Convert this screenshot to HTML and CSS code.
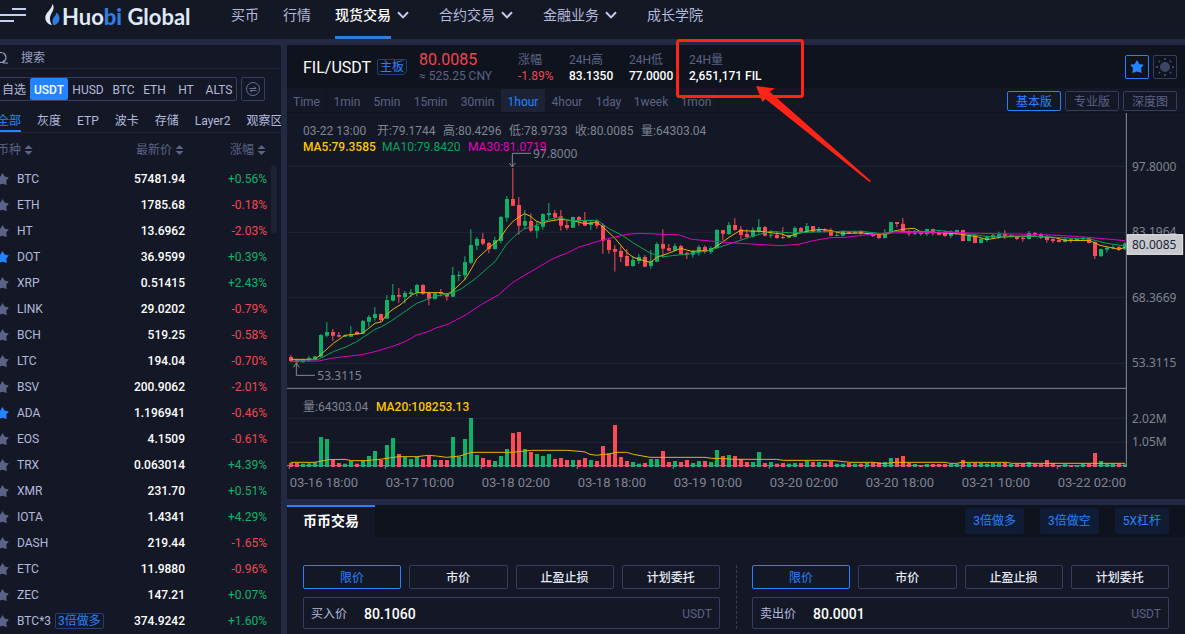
FILE: index.html
```html
<!DOCTYPE html>
<html lang="zh-CN">
<head>
<meta charset="utf-8">
<title>FIL/USDT - Huobi Global</title>
<link rel="stylesheet" href="styles.css">
</head>
<body>
<svg class="defs" aria-hidden="true">
  <symbol id="star" viewBox="0 0 13 13"><path d="M6.5 0 8.6 3.600 12.8 4.400 10.3 7.500 10.8 12 6.5 10.700 2.2 12 2.7 7.500 .2 4.400 4.4 3.600Z"/></symbol>
  <symbol id="sort" viewBox="0 0 9 10"><path d="M4.5 0 8.5 4H.5ZM4.5 10 8.5 6H.5Z"/></symbol>
  <symbol id="chevron" viewBox="0 0 12 8"><path d="M1 1.2 6 6.4 11 1.2" fill="none" stroke="currentColor" stroke-width="2"/></symbol>
</svg>
<div class="shell">
  <header class="topbar">
    <button class="burger" aria-label="菜单"><svg viewBox="0 0 28 14" width="28" height="14"><path d="M13 1h14M0 7h27M0 13h15" stroke="#c3d0f2" stroke-width="2"/></svg></button>
    <a class="logo" href="#">
      <svg viewBox="0 0 15 22" width="15" height="22"><path d="M7.5 0C9.5 3 8.6 5.600 7 8.500 5.600 11 4.600 13 5 16c.2 2 1 3.700 2 5C3 20.500 .3 17.500 .3 13.500.3 8.500 6.500 6 7.500 0Z" fill="#dfe9f8"/><path d="M11.500 8.500c2 1.500 3.200 4 3 6.800-.2 3-2.500 5.300-5.700 5.900-1.500-2-1.800-4.400-.6-6.700 1-2 2.900-3.200 3.300-6Z" fill="#2f7de0"/></svg>
      <span>Huo<b>bi</b> Global</span>
    </a>
    <nav class="nav">
      <a href="#">买币</a>
      <a href="#">行情</a>
      <a href="#" class="on"><span>现货交易</span><svg class="chev"><use href="#chevron"/></svg></a>
      <a href="#" class="more"><span>合约交易</span><svg class="chev"><use href="#chevron"/></svg></a>
      <a href="#" class="more"><span>金融业务</span><svg class="chev"><use href="#chevron"/></svg></a>
      <a href="#" class="more">成长学院</a>
    </nav>
  </header>

  <div class="layout">
    <aside class="side">
      <label class="search">
        <svg viewBox="0 0 14 14" width="14" height="14"><circle cx="7" cy="6.500" r="5" fill="none" stroke="#9aa0c4" stroke-width="1.200"/><path d="M9.500 9.500V12H14" fill="none" stroke="#9aa0c4" stroke-width="1.200"/></svg>
        <input type="text" placeholder="搜索">
      </label>
      <div class="markets">
        <div class="market-tabs">
          <button>自选</button><button class="on">USDT</button><button>HUSD</button><button>BTC</button><button>ETH</button><button>HT</button><button>ALTS</button>
        </div>
        <button class="switch" aria-label="切换"><svg viewBox="0 0 14 14" width="14" height="14" fill="none" stroke="#6a7096"><circle cx="7" cy="7" r="6.500"/><path d="M3.500 6.500H10L8 4.500M10.500 8.500H4L6 10"/></svg></button>
      </div>
      <div class="zones">
        <button class="on">全部</button><button>灰度</button><button>ETP</button><button>波卡</button><button>存储</button><button>Layer2</button><button>观察区</button>
      </div>
      <div class="list">
        <table>
          <thead><tr><th>币种 <svg class="sort"><use href="#sort"/></svg></th><th>最新价 <svg class="sort"><use href="#sort"/></svg></th><th>涨幅 <svg class="sort"><use href="#sort"/></svg></th></tr></thead>
          <tbody id="coins"></tbody>
        </table>
        <i class="thumb"></i>
      </div>
    </aside>

    <main class="main">
      <section class="panel">
        <div class="pair">
          <h1>FIL/USDT</h1><span class="board">主板</span>
          <div class="last"><strong>80.0085</strong><span>≈ 525.25 CNY</span></div>
          <dl class="stats">
            <div><dt>涨幅</dt><dd class="down">-1.89%</dd></div>
            <div><dt>24H高</dt><dd>83.1350</dd></div>
            <div><dt>24H低</dt><dd>77.0000</dd></div>
            <div><dt>24H量</dt><dd>2,651,171 FIL</dd></div>
          </dl>
          <div class="tools">
            <button class="on" aria-label="收藏"><svg width="14" height="14" fill="#2483ff"><use href="#star"/></svg></button>
            <button aria-label="主题"><svg viewBox="0 0 18 18" width="18" height="18" stroke="#3f4565" stroke-width="2"><circle cx="9" cy="9" r="4" fill="#3f4565"/><path d="M9 0v2M9 16v2M0 9h2M16 9h2M2.800 2.800l1.200 1.200M14 14l1.200 1.200M2.800 15.200 4 14M14 4l1.200-1.200"/></svg></button>
          </div>
        </div>
        <div class="frames">
          <div class="periods">
            <button class="time">Time</button><button>1min</button><button>5min</button><button>15min</button><button>30min</button><button class="on">1hour</button><button>4hour</button><button>1day</button><button>1week</button><button class="end">1mon</button>
          </div>
          <div class="views"><button class="on">基本版</button><button>专业版</button><button>深度图</button></div>
        </div>
        <div class="chart">
          <div class="legend">
            <p class="ohlc"><span>03-22 13:00</span> <span>开:79.1744</span> <span>高:80.4296</span> <span>低:78.9733</span> <span>收:80.0085</span> <span>量:64303.04</span></p>
            <p class="ma"><span class="c-y">MA5:79.3585</span> <span class="c-g">MA10:79.8420</span> <span class="c-m">MA30:81.0719</span></p>
          </div>
          <svg id="plot" viewBox="0 0 2694 1158" role="img" aria-label="K线图"></svg>
        </div>
      </section>

      <section class="panel trade">
        <div class="trade-head">
          <h2>币币交易</h2>
          <div class="lever"><a href="#">3倍做多</a><a href="#">3倍做空</a><a href="#">5X杠杆</a></div>
        </div>
        <div class="forms">
          <form>
            <div class="kinds"><button type="button" class="on">限价</button><button type="button">市价</button><button type="button">止盈止损</button><button type="button">计划委托</button></div>
            <label class="field"><span>买入价</span><input type="text" value="80.1060"><em>USDT</em></label>
          </form>
          <form>
            <div class="kinds"><button type="button" class="on">限价</button><button type="button">市价</button><button type="button">止盈止损</button><button type="button">计划委托</button></div>
            <label class="field"><span>卖出价</span><input type="text" value="80.0001"><em>USDT</em></label>
          </form>
        </div>
      </section>
    </main>
  </div>
  <svg class="callout" viewBox="0 0 196 144" width="196" height="144" aria-hidden="true">
    <rect x="1.500" y="1.500" width="125" height="56" rx="2" fill="none" stroke="#ff2416" stroke-width="3"/>
    <path d="M80 47 99 49.500 93.500 52.500 195 142 193.500 143 89.500 60 86.500 63Z" fill="#ff2416"/>
  </svg>
</div>
<script src="chart.js"></script>
</body>
</html>
```
FILE: styles.css
```css
* { box-sizing: border-box; }
body {
  margin: 0;
  height: 100vh;
  overflow: hidden;
  background: #242943;
  color: #b3b9dc;
  font: 12px/16px Roboto, "Noto Sans CJK SC", sans-serif;
}
button { border: 0; padding: 0; background: none; color: inherit; font: inherit; cursor: pointer; }
input { border: 0; outline: 0; padding: 0; background: none; color: inherit; font: inherit; min-width: 0; }
a { color: inherit; text-decoration: none; }
h1, h2, p, dl, dd { margin: 0; }
.defs { position: absolute; width: 0; height: 0; }

/* the shell is scrolled 16px to the left */
.shell { position: relative; margin-left: -16px; height: 100vh; display: flex; flex-direction: column; }

.topbar { flex: none; display: flex; height: 39px; margin-bottom: 6px; padding-left: 15px; background: #141724; }
.burger { height: 30px; display: flex; align-items: center; }
.logo { display: flex; align-items: flex-start; gap: 2px; padding-top: 4px; margin-left: 18px; width: 168px; color: #dfe9f8; font: 700 22px/26px Lato, sans-serif; white-space: nowrap; }
.logo b { color: #2f7de0; }
.nav { display: flex; gap: 24px; margin-left: 18px; font-size: 14px; line-height: 30px; white-space: nowrap; }
.nav a { display: flex; gap: 6px; }
.nav .on { color: #fff; font-weight: 500; }
.nav .on span { border-bottom: 3px solid #2f7de0; }
.nav .more { margin-left: 6px; }
.chev { width: 12px; height: 8px; margin-top: 11px; color: #c5caea; }

.layout { flex: 1; min-height: 0; display: flex; gap: 6px; }
.side { flex: none; width: 297px; background: #141826; overflow: hidden; border-radius: 0 2px 0 0; }
.search { display: flex; align-items: center; gap: 13px; height: 24px; padding: 2px 0 0 10px; border-bottom: 1px solid #1f2438; }
.search input::placeholder { color: #9aa0c4; opacity: 1; }
.markets { display: flex; gap: 4px; padding: 8px 16px 6px 13px; }
.market-tabs { flex: 1; display: grid; grid-template-columns: 32px 38px 40px 31px 31px 32px 1fr; height: 24px; border: 1px solid #363c60; border-radius: 2px; }
.market-tabs button { padding-top: 2px; }
.market-tabs .on { background: #2483ff; color: #fff; border-radius: 2px; font-weight: 500; }
.switch { display: flex; align-items: center; justify-content: center; width: 24px; height: 24px; border: 1px solid #363c60; border-radius: 2px; }
.zones { display: flex; gap: 16px; height: 26px; padding-left: 13px; border-bottom: 1px solid #1f2438; white-space: nowrap; }
.zones button { flex: none; padding-top: 2px; }
.zones .on { color: #2483ff; border-bottom: 2px solid #2483ff; padding-top: 4px; }

.list { position: relative; }
.thumb { position: absolute; right: 4px; top: 32px; width: 6px; height: 68px; border-radius: 3px; background: #1e2236; }
table { width: 100%; border-collapse: collapse; table-layout: fixed; }
th { height: 32px; padding: 2px 0 0; font-weight: 400; text-align: right; color: #5c6285; }
th:first-child { width: 120px; padding-left: 13px; text-align: left; }
th:nth-child(2) { width: 81px; padding-right: 1px; }
th:last-child { padding-right: 15px; }
.sort { width: 9px; height: 10px; fill: #5c6285; vertical-align: -1px; }
td { height: 26px; padding: 2px 0 0; text-align: right; }
td:nth-child(2) { color: #fff; font-weight: 500; }
td:last-child { padding-right: 14px; }
td:first-child { padding-left: 12px; text-align: left; white-space: nowrap; }
.coin { display: flex; align-items: center; gap: 8px; }
.coin svg { width: 13px; height: 13px; fill: #5c6285; }
.coin .fav { fill: #2483ff; }
.coin em { margin-left: -4px; padding: 0 2px; border: 1px solid #1c4078; color: #2483ff; font-style: normal; line-height: 14px; border-radius: 2px; }
.up { color: #12b166; }
.down, .stats .down { color: #f04652; }

.main { flex: 1; min-width: 0; display: flex; flex-direction: column; gap: 6px; }
.panel { background: #141826; }
.pair { display: flex; align-items: center; height: 44px; padding: 0 8px 0 16px; background: #0f131d; border-bottom: 1px solid #151720; white-space: nowrap; }
.pair h1 { padding-top: 2px; font-size: 16px; line-height: 20px; font-weight: 400; color: #fff; width: 74px; }
.board { width: 30px; height: 16px; border: 1px solid #1c4078; border-radius: 2px 2px 5px 2px; color: #2483ff; line-height: 15px; text-align: center; }
.last { width: 99px; padding-top: 3px; margin-left: 12px; color: #5c6285; }
.last strong { display: block; color: #f04652; font-size: 16px; font-weight: 400; line-height: 16px; }
.last span { display: block; }
.stats { display: flex; gap: 15px; padding-top: 2px; }
.stats div { min-width: 45px; }
.stats div:first-child { min-width: 36px; }
.stats dt { color: #5c6285; }
.stats dd { color: #fff; font-weight: 500; }
.stats .down { font-weight: 400; }
.tools { display: flex; gap: 4px; margin-left: auto; }
.tools button { width: 24px; height: 24px; display: flex; align-items: center; justify-content: center; border: 1px solid #363c60; border-radius: 2px; }
.tools .on { border-color: #2483ff; }

.frames { display: flex; height: 24px; padding-right: 8px; border-bottom: 1px solid #10131b; color: #5c6285; }
.periods { display: grid; grid-template-columns: 40px 40px 40px 47px 47px 44px 44px 39px 46px 45px; }
.periods button { padding-top: 2px; }
.periods .time, .periods .end { border-right: 1px solid #10131b; }
.periods .on { background: #1d2236; color: #2483ff; }
.views { display: flex; gap: 4px; margin: 2px 0 2px auto; }
.views button { width: 54px; height: 20px; padding-top: 2px; border: 1px solid #363c60; border-radius: 2px; line-height: 16px; }
.views .on { border-color: #2483ff; color: #2483ff; }

.chart { position: relative; }
.chart > svg { display: block; width: 100%; height: auto; }
.legend { position: absolute; left: 16px; top: 10px; color: #7f8491; }
.legend p { display: grid; white-space: nowrap; line-height: 16px; }
.ohlc { grid-template-columns: 74px repeat(5, 66px); }
.ma { grid-template-columns: 79px 86px 80px; }
.c-y { color: #ffc400; font-weight: 500; }
.c-g { color: #08a35a; }
.c-m { color: #e100c3; }

.grid { stroke: #20243a; stroke-width: 3; }
.axis { stroke: #858998; stroke-width: 3; fill: none; }
.g { fill: #0cb367; }
.r { fill: #ff4a54; }
.line { fill: none; stroke-width: 3; }
.line.y { stroke: #e8b400; }
.line.gr { stroke: #08a35a; }
.line.m { stroke: #e100c3; }
.tick { fill: #7f8491; font: 36px "Noto Sans", sans-serif; }
.date { fill: #7f8491; font: 39px Roboto, sans-serif; }
.vol { fill: #7f8491; font: 36px Roboto, "Noto Sans CJK SC", sans-serif; }
.vol.y { fill: #ffc400; font-weight: 500; }
.tag { fill: #c8c9ce; stroke: #eee; stroke-width: 3; }
.tagtext { fill: #20243a; }

.trade { flex: 1; }
.trade-head { display: flex; justify-content: space-between; height: 32px; padding-right: 16px; background: #0f131d; }
.trade-head h2 { width: 88px; padding-left: 16px; border-top: 2px solid #2483ff; background: #141826; color: #fff; font-size: 14px; line-height: 29px; font-weight: 700; }
.lever { display: flex; gap: 16px; padding: 3px 0; }
.lever a { padding: 1px 8px 0; line-height: 25px; border-radius: 2px; background: #101c34; color: #2483ff; }
.forms { display: grid; grid-template-columns: 1fr 1fr; padding-top: 28px; }
.forms form { padding: 0 16px; display: grid; gap: 8px; }
.forms form + form { border-left: 1px dashed #363c60; padding-left: 15px; }
.kinds { display: grid; grid-template-columns: repeat(4, 1fr); gap: 8px; color: #e6e9f7; font-weight: 500; }
.kinds button { height: 24px; padding-top: 2px; border: 1px solid #363c60; border-radius: 2px; }
.kinds .on { border-color: #2483ff; color: #2483ff; font-weight: 400; }
.field { display: flex; align-items: center; height: 32px; padding: 2px 7px 0; border: 1px solid #363c60; border-radius: 2px; }
.field span { width: 53px; }
.field input { flex: 1; color: #fff; font-size: 14px; font-weight: 500; }
.field em { color: #5c6285; font-style: normal; }

.callout { position: absolute; left: 692px; top: 39px; pointer-events: none; }
```
FILE: chart.js
```js
const coins = [
  ['BTC', '57481.94', '+0.56%'], ['ETH', '1785.68', '-0.18%'], ['HT', '13.6962', '-2.03%'],
  ['DOT', '36.9599', '+0.39%', 1], ['XRP', '0.51415', '+2.43%'], ['LINK', '29.0202', '-0.79%'],
  ['BCH', '519.25', '-0.58%'], ['LTC', '194.04', '-0.70%'], ['BSV', '200.9062', '-2.01%'],
  ['ADA', '1.196941', '-0.46%', 1], ['EOS', '4.1509', '-0.61%'], ['TRX', '0.063014', '+4.39%'],
  ['XMR', '231.70', '+0.51%'], ['IOTA', '1.4341', '+4.29%'], ['DASH', '219.44', '-1.65%'],
  ['ETC', '11.9880', '-0.96%'], ['ZEC', '147.21', '+0.07%'], ['BTC*3', '374.9242', '+1.60%', 0, '3倍做多']
];
document.getElementById('coins').innerHTML = coins.map(([n, p, c, fav, tag]) =>
  `<tr><td><div class="coin"><svg class="${fav ? 'fav' : ''}"><use href="#star"/></svg>${n}${tag ? ` <em>${tag}</em>` : ''}</div></td><td>${p}</td><td class="${c[0] === '+' ? 'up' : 'down'}">${c}</td></tr>`).join('');

/* candles: direction, high, body top, body bottom, low; one block per vertical offset */
const candleBlocks = [
  [141, `r585,591,603,607 r597,599,607,609 g597,600,607,608 g588,594,601,605 g588,589,600,601 g522,525,590,592 g487,516,527,532 r507,516,527,543 r516,525,530,532 g524,526,530,531 g498,523,530,531 r513,516,523,525 g480,483,521,523 g465,471,485,500 g441,462,474,482 r461,462,480,487 g405,420,476,477 g372,405,422,424 r384,405,410,428 g393,399,411,430 g387,397,402,411 g372,375,397,409 r372,375,401,405 r395,399,416,436 g396,400,416,419 r387,396,401,409 r399,400,410,422 g321,345,410,411 g334,345,348,364 g289,306,346,360 g208,255,308,313 g231,237,257,270 r219,237,251,256 r246,249,267,280 g230,240,267,269 g168,171,243,250 g108,117,173,185 r24,117,137,138 r111,135,197,224 g150,183,197,208 r160,183,212,217 g183,198,212,235 g160,162,200,209 g129,159,165,181 r150,159,171,180`],
  [171, `r120,139,167,182 r153,165,174,180 g140,141,173,174 r138,141,153,168 r126,150,167,168 g150,157,165,180 r148,153,167,176 r160,166,212,251 r205,210,240,251 r226,237,245,305 r229,243,261,276 r237,258,288,289 g258,270,288,290 g252,261,273,282 r255,261,290,291 g240,273,288,296 g217,222,275,277 r178,222,236,263 r222,234,242,244 g220,228,242,244 r224,228,252,254 r245,249,254,267 g240,243,254,263 g226,231,246,257 r226,231,246,251 g229,234,246,252 g177,180,234,236 r180,180,191,211 g156,165,192,195 r145,165,180,182 r168,178,195,208 r178,192,201,203 g172,181,200,202 g147,171,184,190 r168,171,197,199 g180,194,197,204 r183,195,204,206 r171,201,204,207 g195,195,203,204 g169,174,200,202 r171,174,186,190 g159,168,186,187 r168,168,185,187 g171,180,185,188 r175,178,182,187 r175,181,197,198 g187,195,198,199 g180,183,197,199 r184,186,190,192`],
  [231, `g122,126,130,132 r120,123,131,134 g127,129,133,135 r130,133,138,141 r132,134,144,147 g117,131,144,145 g96,96,126,128 r96,96,102,112 r84,101,126,128 r119,125,131,138 g120,127,131,136 r122,127,132,137 g116,117,132,138 r116,117,130,137 r121,127,134,137 r122,128,138,140 g121,131,138,144 g119,120,131,132 r119,120,153,154 g132,136,153,154 r134,136,159,160 g144,147,159,160 g136,141,150,156 g130,135,143,145 g125,132,140,146 r120,131,138,147 g132,136,139,142 r138,140,147,150 r140,143,147,155 g123,129,147,148 r126,129,132,138 r129,132,143,147 r135,141,150,158 r144,147,153,159 r146,150,156,157 g142,147,156,157 r145,148,152,158 g143,146,151,154 g139,144,148,151 r143,144,159,160 r154,156,198,207 g176,177,198,201 g170,173,179,188 g166,172,175,178 r168,171,179,183 g157,160,178,180`]
];
const volumes = [
  8,8,6,7,10,86,80,17,8,6,14,6,15,29,44,17,62,83,35,26,20,27,20,29,17,17,17,86,27,80,143,32,23,17,14,29,50,98,101,50,41,35,29,35,20,23,17,17,17,
  23,17,14,59,37,122,26,14,11,6,8,20,20,44,11,14,11,17,8,14,14,11,47,29,32,29,20,11,11,41,8,11,6,8,6,8,8,14,11,11,8,14,6,6,8,6,6,8,9,10,
  11,23,23,29,8,5,2,5,5,5,5,6,6,17,8,8,8,6,8,8,9,5,6,6,11,6,6,17,8,2,5,2,2,6,6,38,14,6,6,6,4
];
/* each line is a list of [x offset, y offset, points] */
const lines = [
  ['y', [[-6,141,'17,598 90,598 108,583 145,550 180,526 232,520 270,490 290,485 305,464 325,447 345,435 380,405 395,398 470,398 485,404 503,393 522,375 540,358 560,325 575,297 610,265 645,236 665,205 685,183 718,161 735,168 755,184 772,189 790,184'],
    [819,171,'0,148 40,152 70,160 90,160 110,156 130,172 165,205 200,247 220,262 255,273 272,277 290,262 325,250 362,235 395,244 450,241 475,225 510,200 540,182 600,184 665,192 685,199 715,190 745,183 780,178 810,181 840,189'],
    [1674,231,'0,130 50,129 100,133 130,131 150,122 190,116 208,115 226,125 300,129 350,133 400,141 426,149 470,141 560,138 630,143 660,151 735,152 765,166 822,178 840,172']]],
  ['gr', [[-6,141,'17,604 100,598 145,575 180,562 215,545 270,508 290,500 320,482 395,430 450,409 500,400 530,386 575,353 610,322 630,305 650,275 665,252 690,227 718,206 745,200 780,184 810,173'],
    [819,171,'0,143 30,152 112,151 150,178 185,195 225,222 272,250 310,260 400,250 450,241 520,218 570,201 630,184 700,189 760,186'],
    [1674,231,'0,124 50,124 110,131 150,124 250,125 280,121 330,127 380,133 430,140 500,138 560,139 600,140 700,146 735,147 780,159 840,168']]],
  ['m', [[-6,141,'17,604 100,603 145,594 230,584 270,575 320,560 360,545 395,525 430,515 450,505 490,492 540,466 590,433 640,405 680,370 718,346 760,322 800,298'],
    [819,171,'0,257 20,250 55,232 110,215 165,201 200,193 240,190 310,193 355,194 395,208 450,213 540,220 660,227 715,223 760,212 810,203'],
    [1674,231,'0,142 60,135 110,130 200,127 330,127 400,130 560,133 640,136 730,142 840,152']]],
  ['y', [[-6,801,'17,247 90,247 130,239 180,238 200,242 240,242 285,238 340,230 395,230 430,226 455,228 485,232 525,228 558,217 680,217 740,211 845,211'],
    [879,861,'0,154 15,156 30,163 50,166 70,163 90,162 105,157 140,157 160,163 210,172 375,172 395,175 420,175 460,178 590,178 610,181 755,181 810,187 880,187'],
    [1779,831,'0,220 20,220 45,217 195,217 210,220 230,220 245,217 380,217 395,220 735,220']]]
];

const STEP = 18, BASE = 1058, RIGHT = 2518;
let out = '';
for (const y of [160, 358, 553, 751, 916, 988]) out += `<path class="grid" d="M0 ${y}H${RIGHT}"/>`;

let i = 0;
for (const [dy, rows] of candleBlocks) {
  for (const row of rows.split(' ')) {
    const [hi, top, bottom, lo] = row.slice(1).split(',').map(v => +v + dy);
    const x = 6 + STEP * i;
    const h = volumes[i] || 3;
    out += `<g class="${row[0]}"><rect x="${x + 4}" y="${hi}" width="3" height="${lo - hi}"/>` +
      `<rect x="${x}" y="${top}" width="12" height="${Math.max(3, bottom - top)}" rx="1"/>` +
      `<rect x="${x}" y="${BASE - h}" width="12" height="${h + 4}"/></g>`;
    i++;
  }
}
for (const [cls, parts] of lines) {
  const pts = parts.flatMap(([dx, dy, s]) => s.split(' ').map(p => {
    const [x, y] = p.split(',');
    return `${+x + dx},${+y + dy}`;
  })).join(' ');
  out += `<polyline class="line ${cls}" points="${pts}"/>`;
}
out += `<path class="axis" d="M0 826H${RIGHT}M0 ${BASE}H${RIGHT}M${RIGHT} 0V${BASE + 3}"/>`;
['03-16 18:00', '03-17 10:00', '03-18 02:00', '03-18 18:00', '03-19 10:00', '03-20 02:00', '03-20 18:00', '03-21 10:00', '03-22 02:00']
  .forEach((d, k) => { out += `<path class="axis" d="M${7 + 288 * k} ${BASE}v10"/><text class="date" x="${8 + 288 * k}" y="1122">${d}</text>`; });
for (const [t, y] of [['97.8000', 175], ['83.1964', 370], ['68.3669', 568], ['53.3115', 763], ['2.02M', 930], ['1.05M', 999]])
  out += `<text class="tick" x="2535" y="${y}">${t}</text>`;
out += `<rect class="tag" x="2521" y="365" width="166" height="59"/><text class="tick tagtext" x="2535" y="408">80.0085</text>`;
out += `<path class="axis" d="M732 121H676V162M667 150l9 12 9-12M84 787H28V750M19 763l9-13 9 13"/>`;
out += `<text class="tick" x="738" y="136">97.8000</text><text class="tick" x="91" y="801">53.3115</text>`;
out += `<text class="vol" x="48" y="894">量:64303.04</text><text class="vol y" x="267" y="894">MA20:108253.13</text>`;
document.getElementById('plot').innerHTML = out;
```
